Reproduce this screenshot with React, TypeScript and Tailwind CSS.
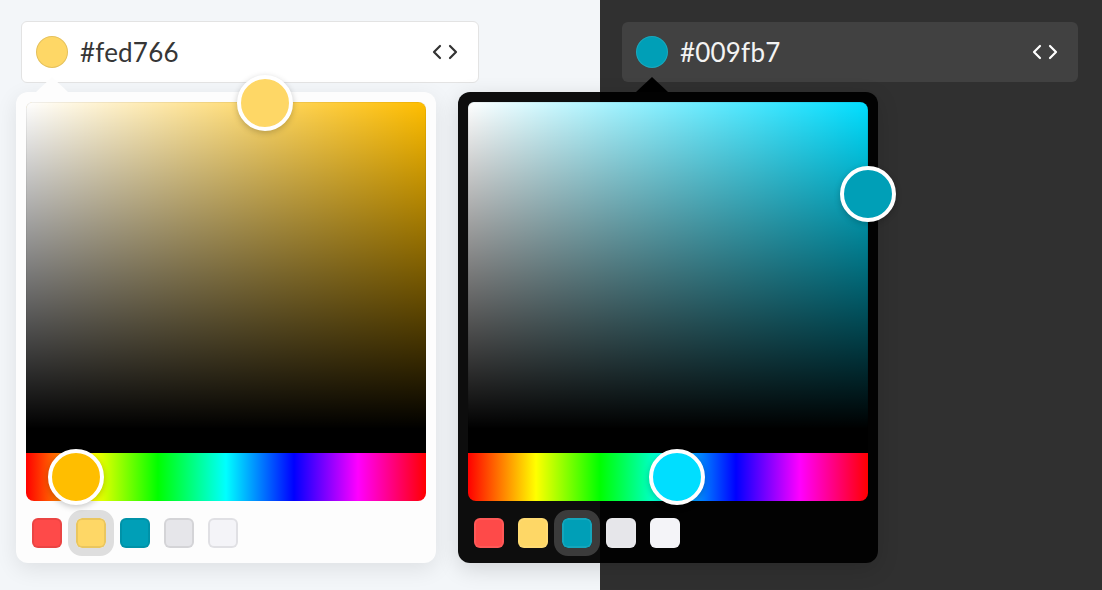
import React from "react"

const SWATCHES = ["#fe4a49", "#fed766", "#009fb7", "#e6e6ea", "#f4f4f8"]

// hex -> hsv, used to place the pointers
function hexToHsv(hex: string) {
  const n = parseInt(hex.slice(1), 16)
  const r = ((n >> 16) & 255) / 255
  const g = ((n >> 8) & 255) / 255
  const b = (n & 255) / 255
  const max = Math.max(r, g, b)
  const min = Math.min(r, g, b)
  const d = max - min
  let h = 0
  if (d) {
    if (max === r) h = ((g - b) / d) % 6
    else if (max === g) h = (b - r) / d + 2
    else h = (r - g) / d + 4
    h *= 60
    if (h < 0) h += 360
  }
  return { h, s: max ? d / max : 0, v: max }
}

function CodeIcon({ className }: { className: string }) {
  return (
    <svg width="28" height="16" viewBox="0 0 28 16" fill="none" className={className}>
      <polyline points="9,2 3,8 9,14" stroke="currentColor" strokeWidth="2.2" strokeLinecap="round" strokeLinejoin="round" />
      <polyline points="19,2 25,8 19,14" stroke="currentColor" strokeWidth="2.2" strokeLinecap="round" strokeLinejoin="round" />
    </svg>
  )
}

function Pointer({ color, left, top }: { color: string; left: string; top: string }) {
  return (
    <div
      className="absolute z-10 w-[56px] h-[56px] rounded-full border-4 border-white shadow-[0_2px_6px_rgba(0,0,0,0.22)] -translate-x-1/2 -translate-y-1/2"
      style={{ backgroundColor: color, left, top }}
    />
  )
}

function Picker({ color, selected, dark }: { color: string; selected: number; dark?: boolean }) {
  const { h, s, v } = hexToHsv(color)
  const hueColor = `hsl(${h}, 100%, 50%)`

  return (
    <div>
      {/* saturation */}
      <div
        className="relative h-[351px] rounded-t-[8px] border-b-[24px] border-black"
        style={{ backgroundColor: hueColor }}
      >
        <div className="absolute inset-0 rounded-t-[6px] bg-linear-to-r from-white to-transparent" />
        <div className="absolute inset-0 rounded-t-[6px] bg-linear-to-t from-black to-transparent" />
        <div className="absolute inset-0 rounded-t-[6px] shadow-[inset_0_0_0_1px_rgba(0,0,0,0.06)]" />
        <Pointer color={color} left={`${s * 100}%`} top={`${(1 - v) * 100}%`} />
      </div>

      {/* hue */}
      <div className="relative h-[48px] rounded-b-[8px] bg-[linear-gradient(to_right,#f00_0%,#ff0_17%,#0f0_33%,#0ff_50%,#00f_67%,#f0f_83%,#f00_100%)]">
        <Pointer color={hueColor} left={`${(h / 360) * 100}%`} top="50%" />
      </div>

      {/* swatches */}
      <div className="flex gap-[14px] px-[6px] mt-[17px] mb-[5px]">
        {SWATCHES.map((c, i) => (
          <div
            key={c}
            className={
              "w-[30px] h-[30px] rounded-[6px] " +
              (dark ? "shadow-[inset_0_0_0_2px_rgba(255,255,255,0.08)]" : "shadow-[inset_0_0_0_2px_rgba(0,0,0,0.08)]") +
              (i === selected
                ? dark
                  ? " outline-[8px] outline-solid outline-[#3b3b3b]"
                  : " outline-[8px] outline-solid outline-[#dedede]"
                : "")
            }
            style={{ backgroundColor: c }}
          />
        ))}
      </div>
    </div>
  )
}

export default function App() {
  return (
    <div className="flex w-[1102px] h-[590px] overflow-hidden font-['Lato','Open_Sans',sans-serif]">
      {/* ─── LIGHT ─── */}
      <div className="relative w-[600px] bg-[#f3f6f9] pt-[21px] pl-[21px]">
        <div className="w-[458px] h-[62px] bg-white border border-[#e3e3e3] rounded-[6px] flex items-center pl-[14px] pr-[19px]">
          <div className="w-[32px] h-[32px] rounded-full bg-[#fed766] shadow-[inset_0_0_0_1px_rgba(0,0,0,0.1)]" />
          <span className="ml-[12px] text-[26px] text-[#363636] tracking-[0.2px]">#fed766</span>
          <CodeIcon className="ml-auto text-[#333]" />
        </div>

        <div className="absolute z-10 left-[16px] top-[92px] w-[420px] p-[10px] bg-[#fdfdfd] rounded-[12px] shadow-[0_6px_22px_rgba(0,0,0,0.09)]">
          <div className="absolute left-[20px] -top-[15px] w-0 h-0 border-x-[16px] border-x-transparent border-b-[15px] border-b-[#fdfdfd]" />
          <Picker color="#fed766" selected={1} />
        </div>
      </div>

      {/* ─── DARK ─── */}
      <div className="relative flex-1 bg-[#303030] pt-[22px] pl-[22px]">
        <div className="w-[456px] h-[60px] bg-[#414141] rounded-[6px] flex items-center pl-[14px] pr-[19px]">
          <div className="w-[32px] h-[32px] rounded-full bg-[#009fb7] shadow-[inset_0_0_0_1px_rgba(255,255,255,0.1)]" />
          <span className="ml-[12px] text-[26px] text-[#f3f3f3] tracking-[0.2px]">#009fb7</span>
          <CodeIcon className="ml-auto text-white" />
        </div>

        <div className="absolute z-20 -left-[142px] top-[92px] w-[420px] p-[10px] bg-black/95 rounded-[12px] shadow-[0_6px_22px_rgba(0,0,0,0.14)]">
          <div className="absolute left-[178px] -top-[15px] w-0 h-0 border-x-[16px] border-x-transparent border-b-[15px] border-b-black" />
          <Picker color="#009fb7" selected={2} dark />
        </div>
      </div>
    </div>
  )
}
